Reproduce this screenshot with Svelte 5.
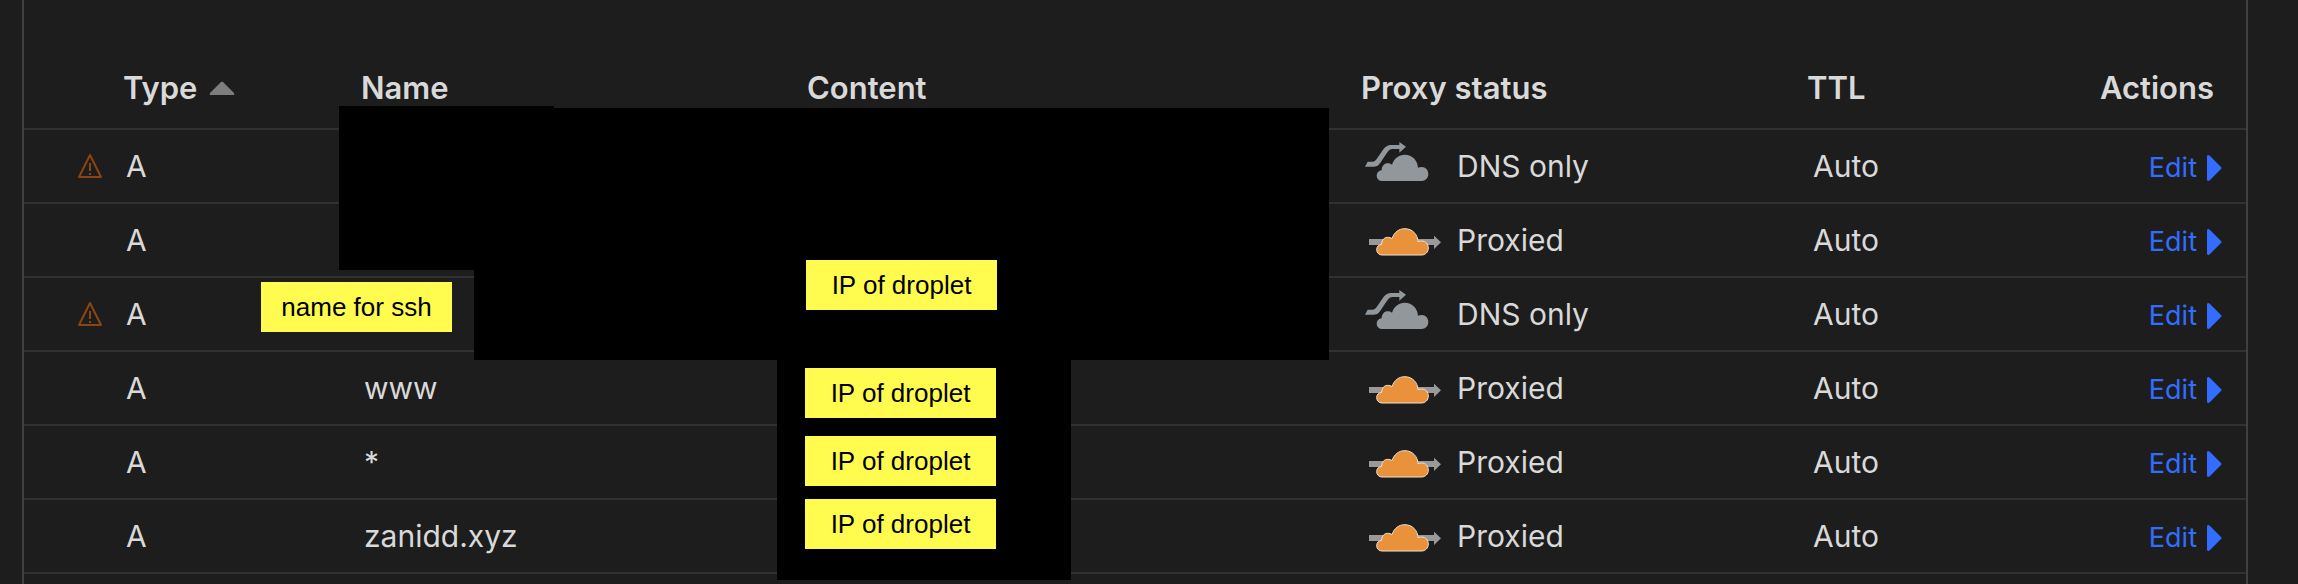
<script>
    const records = [
        { type: "A", name: "", proxied: false, warning: true },
        { type: "A", name: "", proxied: true, warning: false },
        { type: "A", name: "", proxied: false, warning: true },
        { type: "A", name: "www", proxied: true, warning: false },
        { type: "A", name: "*", proxied: true, warning: false },
        { type: "A", name: "zanidd.xyz", proxied: true, warning: false }
    ];

    //Redacted areas, measured from the panel corner
    const masks = [
        { x: 315, y: 106, w: 215, h: 164 },
        { x: 450, y: 108, w: 855, h: 252 },
        { x: 753, y: 358, w: 294, h: 222 }
    ];

    const notes = [
        { x: 237, y: 282, text: "name for ssh" },
        { x: 782, y: 260, text: "IP of droplet" },
        { x: 781, y: 368, text: "IP of droplet" },
        { x: 781, y: 436, text: "IP of droplet" },
        { x: 781, y: 499, text: "IP of droplet" }
    ];

    const cloud = "M54 123A16 16 0 0 1 38 107C38 98 44 92 53 91C53 78 61 70 71 70C76 70 80 71 84 74C90 55 105 44 122 44C145 44 161 61 162 83C165 82 169 81 173 81C185 81 193 90 193 102C193 114 184 123 173 123Z";

    let ascending = $state(true);
    let rows = $derived([...records].sort((a, b) => ascending ? a.type.localeCompare(b.type) : b.type.localeCompare(a.type)));
</script>

<main class="panel">
    <table>
        <colgroup>
            <col class="col-warning">
            <col class="col-type">
            <col class="col-name">
            <col class="col-content">
            <col class="col-proxy">
            <col class="col-ttl">
            <col>
        </colgroup>
        <thead>
            <tr>
                <th></th>
                <th aria-sort={ascending ? "ascending" : "descending"}>
                    <button class="sort" onclick={() => ascending = !ascending}>
                        Type
                        <svg class:flip={!ascending} width="26" height="14" viewBox="0 0 26 14" aria-hidden="true">
                            <path d="M12 1Q13 0 14 1L25 12Q26 14 24 14H2Q0 14 1 12Z" fill="#7d7d7d" />
                        </svg>
                    </button>
                </th>
                <th>Name</th>
                <th>Content</th>
                <th>Proxy status</th>
                <th>TTL</th>
                <th class="actions">Actions</th>
            </tr>
        </thead>
        <tbody>
            {#each rows as record}
                <tr>
                    <td class="warning">
                        {#if record.warning}
                            <svg width="26" height="26" viewBox="0 0 26 26" role="img" aria-label="Warning">
                                <path d="M13 2L24 24H2Z" fill="none" stroke="#8a4513" stroke-width="2" stroke-linejoin="round" />
                                <path d="M13 10V18M13 20V22" stroke="#8a4513" stroke-width="2" />
                            </svg>
                        {/if}
                    </td>
                    <td>{record.type}</td>
                    <td>{record.name}</td>
                    <td></td>
                    <td>
                        <div class="status">
                            <svg width="78" height="52" viewBox="0 0 234 156" aria-hidden="true">
                                {#if record.proxied}
                                    <path d="M15 75H210V65L231 85L210 105V93H15Z" fill="#999" />
                                    <path d={cloud} fill="#e9913b" stroke="#f3e3d2" stroke-width="3" />
                                {:else}
                                    <path d="M3 80L11 65H24C32 65 34 62 38 57L54 34C64 18 72 15 84 15H106V6L126 20L106 38V27H86C78 27 74 31 68 40L52 64C44 76 40 80 30 80Z" fill="#92979b" />
                                    <path d={cloud} fill="#92979b" />
                                {/if}
                            </svg>
                            {record.proxied ? "Proxied" : "DNS only"}
                        </div>
                    </td>
                    <td class="ttl">Auto</td>
                    <td class="actions">
                        <button class="edit">
                            Edit
                            <svg width="15" height="26" viewBox="0 0 15 26" aria-hidden="true">
                                <path d="M0 1Q1 -1 3 1L14 12Q15 13 14 14L3 25Q1 27 0 25Z" fill="#336dff" />
                            </svg>
                        </button>
                    </td>
                </tr>
            {/each}
        </tbody>
    </table>

    {#each masks as mask}
        <div class="mask" style="left: {mask.x}px; top: {mask.y}px; width: {mask.w}px; height: {mask.h}px"></div>
    {/each}
    {#each notes as note}
        <div class="note" style="left: {note.x}px; top: {note.y}px">{note.text}</div>
    {/each}
</main>

<style>
    :global(body){
        background-color: #1d1d1d;
    }

    .panel{
        position: relative;
        box-sizing: border-box;
        min-height: 100vh;
        margin: 0 50px 0 22px;
        border-left: 2px solid #404040;
        border-right: 2px solid #404040;
        color: #d9d9d9;
        font-family: Inter, "Liberation Sans", sans-serif;
        font-size: 30px;
        line-height: 36px;
    }

    /*===Table===*/
    table{
        width: 100%;
        table-layout: fixed;
        border-spacing: 0;
    }

    .col-warning{ width: 99px; }
    .col-type{ width: 238px; }
    .col-name{ width: 446px; }
    .col-content{ width: 554px; }
    .col-proxy{ width: 446px; }
    .col-ttl{ width: 260px; }

    th{
        padding: 70px 0 22px;
        border-bottom: 2px solid #313131;
        font-size: 31px;
        font-weight: 600;
        text-align: left;
    }

    td{
        box-sizing: border-box;
        height: 74px;
        padding: 0 0 0 3px;
        border-bottom: 2px solid #313131;
    }

    td.warning{
        padding-left: 53px;
    }

    td.ttl{
        padding-left: 6px;
    }

    th.actions{
        padding-right: 32px;
        text-align: right;
    }

    td.actions{
        padding-top: 2px;
        padding-right: 24px;
        text-align: right;
    }

    svg{
        display: block;
        flex: none;
    }

    button{
        padding: 0;
        border: 0;
        background: none;
        color: inherit;
        font: inherit;
        cursor: pointer;
    }

    .sort{
        display: flex;
        align-items: center;
        gap: 12px;
    }

    .flip{
        transform: rotate(180deg);
    }

    .status{
        display: flex;
        align-items: center;
        gap: 15px;
    }

    .edit{
        display: inline-flex;
        align-items: center;
        gap: 10px;
        color: #336dff;
        font-size: 27px;
        vertical-align: middle;
    }

    /*===Redaction===*/
    .mask{
        position: absolute;
        background-color: #000;
    }

    .note{
        position: absolute;
        box-sizing: border-box;
        min-width: 191px;
        padding: 7px 16px;
        background-color: #fffc4f;
        color: #000;
        font-family: "Liberation Sans", Helvetica, sans-serif;
        font-size: 26px;
        text-align: center;
        white-space: nowrap;
    }
</style>
